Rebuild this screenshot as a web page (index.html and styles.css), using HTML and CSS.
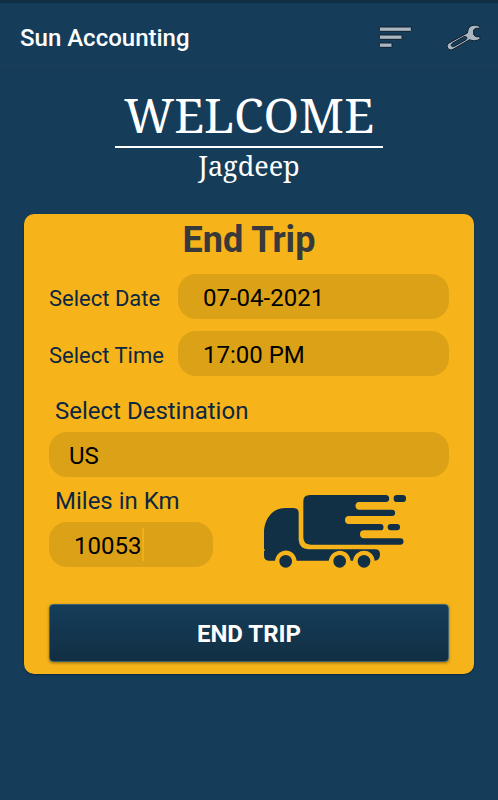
FILE: index.html
```html
<!DOCTYPE html>
<html lang="en">
<head>
	<meta charset="UTF-8">
	<meta name="viewport" content="width=device-width, initial-scale=1">
	<title>Sun Accounting</title>
	<link rel="stylesheet" href="styles.css">
</head>
<body>
	<header class="topbar">
		<span class="brand">Sun Accounting</span>
		<button class="icon-btn" type="button" aria-label="Sort">
			<svg width="34" height="22" viewBox="0 0 102 66">
				<g fill="#a9b7c2" stroke="#101c28" stroke-width="3">
					<rect x="4" y="0" width="96" height="13" rx="2"/>
					<rect x="4" y="24" width="68" height="13" rx="2"/>
					<rect x="4" y="48" width="38" height="13" rx="2"/>
				</g>
			</svg>
		</button>
		<button class="icon-btn" type="button" aria-label="Settings">
			<svg width="36" height="28" viewBox="0 0 108 84">
				<path fill="#a9b7c2" stroke="#101c28" stroke-width="3" stroke-linejoin="round" d="M102 9C95 2 77 1 69 11C65 16 66 23 64 27L9 57C3 61 2 66 5 72C8 78 15 79 21 76L71 47C79 51 93 52 102 44V38H90L83 32V18L88 13H101Z"/>
				<path fill="#153d5a" stroke="#101c28" stroke-width="3" d="M19 58L54 38C61 35 66 42 60 47L25 67C17 71 12 63 19 58Z"/>
			</svg>
		</button>
	</header>

	<main class="page">
		<div class="welcome">
			<h1>WELCOME</h1>
			<p>Jagdeep</p>
		</div>

		<form class="card">
			<h2>End Trip</h2>
			<div class="row">
				<label for="date">Select Date</label>
				<input class="field" id="date" type="text" value="07-04-2021">
			</div>
			<div class="row">
				<label for="time">Select Time</label>
				<input class="field" id="time" type="text" value="17:00 PM">
			</div>

			<label class="label-top first" for="destination">Select Destination</label>
			<select class="field" id="destination">
				<option>US</option>
			</select>

			<div class="bottom">
				<div>
					<label class="label-top" for="miles">Miles in Km</label>
					<input class="field active" id="miles" type="text" inputmode="numeric" value="10053">
				</div>
				<svg class="truck" width="144" height="75" viewBox="39 42 432 225" aria-hidden="true">
					<g fill="#112f45">
						<path d="M160 63Q160 45 180 45H407A10 10 0 0 1 407 66H325A12 12 0 0 0 325 89H426A9 9 0 0 1 426 108H297A12 12 0 0 0 297 132H391A9 9 0 0 1 391 151H342A12 12 0 0 0 342 175H451A9 9 0 0 1 451 194H182Q160 194 160 172Z"/>
						<rect x="431" y="45" width="37" height="21" rx="10"/>
						<rect x="413" y="132" width="37" height="19" rx="9"/>
						<path d="M42 160C42 114 70 84 105 84H130Q146 84 146 99V180Q148 206 175 208H376Q390 208 390 223Q390 242 374 242C370 203 316 202 309 242H302C297 202 244 202 236 242H140C134 201 82 201 75 242H56Q42 242 42 226V214L45 210L42 206Z"/>
						<circle cx="107" cy="244" r="19"/>
						<circle cx="269" cy="244" r="19"/>
						<circle cx="342" cy="244" r="19"/>
					</g>
				</svg>
			</div>

			<button class="submit" type="button">END TRIP</button>
		</form>
	</main>
</body>
</html>
```
FILE: styles.css
```css
*{padding: 0;margin: 0;box-sizing: border-box;}
body{
	background-color: #153d5a;
	font-family: Roboto, sans-serif;
}
.topbar{
	display: flex;
	align-items: center;
	gap: 34px;
	height: 71px;
	padding: 2px 16px 0 20px;
	border-top: 3px solid #112f43;
	border-bottom: 1px solid #143954;
}
.brand{
	flex: 1;
	color: #fff;
	font-size: 24px;
	font-weight: 500;
}
.icon-btn{
	display: flex;
	background: none;
	border: 0;
	cursor: pointer;
}
.icon-btn svg{
	overflow: visible;
}

.page{
	padding: 14px 24px;
}
.welcome{
	width: 268px;
	margin: 0 auto 30px;
	color: #fff;
	font-family: "Noto Serif", "Liberation Serif", serif;
	text-align: center;
}
.welcome h1{
	padding-bottom: 1px;
	border-bottom: 2px solid #fff;
	font-size: 48px;
	font-weight: 400;
	line-height: 60px;
}
.welcome p{
	font-size: 27px;
	line-height: 36px;
}

.card{
	padding: 0 25px 12px;
	background-color: #f6b41a;
	border-radius: 10px;
	box-shadow: 0 1px 2px #0b2942;
	color: #0c2743;
}
.card h2{
	margin-bottom: 8px;
	color: #37393b;
	font-size: 36px;
	font-weight: 700;
	line-height: 52px;
	text-align: center;
}
.row{
	display: grid;
	grid-template-columns: 129px 1fr;
	align-items: center;
	margin-bottom: 12px;
}
.row label{
	padding-top: 4px;
	font-size: 22px;
}
.field{
	display: block;
	width: 100%;
	height: 45px;
	padding: 2px 25px 0;
	background-color: #dba217;
	border: 0;
	border-radius: 18px;
	color: #000;
	font-family: inherit;
	font-size: 24px;
	outline: 0;
	appearance: none;
}
select.field{
	padding-left: 20px;
}
/* text cursor of the active field */
.field.active{
	background-image: linear-gradient(#f0af19, #f0af19);
	background-position: 93px 6px;
	background-repeat: no-repeat;
	background-size: 2px 33px;
}
.label-top{
	display: block;
	margin: 10px 0 7px;
	padding-left: 6px;
	font-size: 24px;
	line-height: 28px;
}
.label-top.first{
	margin-top: 21px;
}
.bottom{
	display: grid;
	grid-template-columns: 41% 1fr;
	column-gap: 8px;
}
.truck{
	justify-self: center;
	margin-top: 17px;
}
.submit{
	display: block;
	width: 100%;
	height: 58px;
	margin-top: 35px;
	padding-top: 2px;
	background: linear-gradient(#153d5a, #112f43);
	border: 1px solid #3f6470;
	border-radius: 4px;
	box-shadow: 0 1px 3px rgba(0, 0, 0, .4);
	color: #fff;
	font-family: inherit;
	font-size: 24px;
	font-weight: 700;
	cursor: pointer;
}
```
